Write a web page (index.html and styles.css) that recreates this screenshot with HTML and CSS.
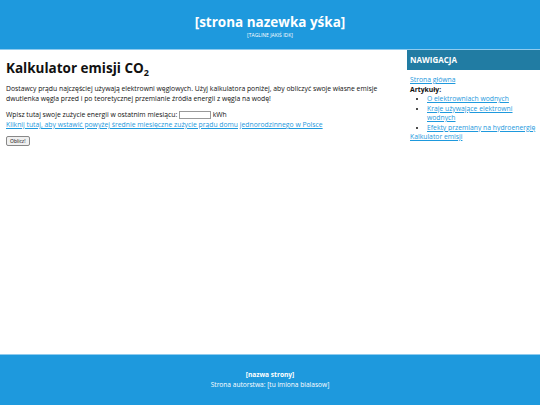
FILE: index.html
```html
<!DOCTYPE html>
<html lang="pl">
<head>
<meta charset="utf-8">
<title>Kalkulator emisji CO2</title>
<link rel="stylesheet" href="styles.css">
</head>
<body>
<div class="page">
  <header class="site-header">
    <h1 class="site-title">[strona nazewka yśka]</h1>
    <p class="site-tagline">[TAGLINE JAKIŚ IDK]</p>
  </header>
  <div class="layout">
    <main class="content">
      <h2 class="page-title">Kalkulator emisji CO<sub>2</sub></h2>
      <p class="intro">Dostawcy prądu najczęściej używają elektrowni węglowych. Użyj kalkulatora poniżej, aby obliczyć swoje własne emisje dwutlenka węgla przed i po teoretycznej przemianie źródła energii z węgla na wodę!</p>
      <form class="calc">
        <label class="calc-row">Wpisz tutaj swoje zużycie energii w ostatnim miesiącu: <input class="calc-input" type="text"> kWh</label>
        <a class="calc-fill" href="#">Kliknij tutaj, aby wstawić powyżej średnie miesięczne zużycie prądu domu jednorodzinnego w Polsce</a>
        <button class="calc-btn" type="button">Oblicz!</button>
      </form>
    </main>
    <aside class="sidebar">
      <h3 class="nav-title">NAWIGACJA</h3>
      <nav class="nav">
        <a href="#">Strona główna</a>
        <strong class="nav-label">Artykuły:</strong>
        <ul class="nav-list">
          <li><a href="#">O elektrowniach wodnych</a></li>
          <li><a href="#">Kraje używające elektrowni wodnych</a></li>
          <li><a href="#">Efekty przemiany na hydroenergię</a></li>
        </ul>
        <a href="#">Kalkulator emisji</a>
      </nav>
    </aside>
  </div>
  <footer class="site-footer">
    <strong>[nazwa strony]</strong>
    <span>Strona autorstwa: [tu imiona bialasow]</span>
  </footer>
</div>
</body>
</html>
```

FILE: styles.css
```css
html, body {
  margin: 0;
  padding: 0;
  height: 100%;
}

body {
  font-family: "Open Sans", "Noto Sans", sans-serif;
  color: #111;
  background: #fff;
}

.page {
  display: flex;
  flex-direction: column;
  min-height: 100%;
}

a {
  color: #1e99dd;
}

.site-header {
  background: #1e99dd;
  color: #fff;
  text-align: center;
  height: 50px;
  box-sizing: border-box;
  padding-top: 13px;
  border-bottom: 1px solid #8fcbee;
}

.site-title {
  margin: 0;
  font-size: 13.5px;
  line-height: 19px;
  font-weight: 700;
}

.site-tagline {
  margin: 0;
  font-size: 5px;
  line-height: 6px;
  text-transform: uppercase;
}

.layout {
  flex: 1;
  display: flex;
}

.content {
  flex: 1;
  padding: 0 6px;
  font-size: 6.8px;
  line-height: 10px;
}

.page-title {
  margin: 8px 0 6px;
  font-size: 13.5px;
  line-height: 20px;
  font-weight: 700;
}

.page-title sub {
  font-size: 9px;
  vertical-align: -3px;
  line-height: 0;
}

.intro {
  margin: 0 0 6px;
}

.calc {
  display: flex;
  flex-direction: column;
  align-items: flex-start;
}

.calc-input {
  width: 30px;
  height: 6px;
  padding: 0;
  font-size: 6px;
  border: 1px solid #999;
  vertical-align: middle;
}

.calc-btn {
  margin-top: 6px;
  font-family: inherit;
  font-size: 5px;
  padding: 1px 3px;
  border: 1px solid #888;
  border-radius: 2px;
  background: #f0f0f0;
}

.sidebar {
  width: 133px;
  font-size: 6.8px;
  line-height: 9.5px;
}

.nav-title {
  margin: 0;
  background: #217ca3;
  color: #fff;
  font-size: 8px;
  line-height: 20px;
  padding: 0 3px;
  font-weight: 700;
}

.nav {
  display: flex;
  flex-direction: column;
  align-items: flex-start;
  padding: 5px 1px 4px 3px;
}

.nav-label {
  font-weight: 700;
}

.nav-list {
  margin: 0;
  padding-left: 17px;
}

.site-footer {
  background: #1e99dd;
  color: #fff;
  border-top: 1px solid #8fcbee;
  height: 51px;
  box-sizing: border-box;
  display: flex;
  flex-direction: column;
  align-items: center;
  justify-content: center;
  font-size: 6.6px;
  line-height: 10px;
}
```
